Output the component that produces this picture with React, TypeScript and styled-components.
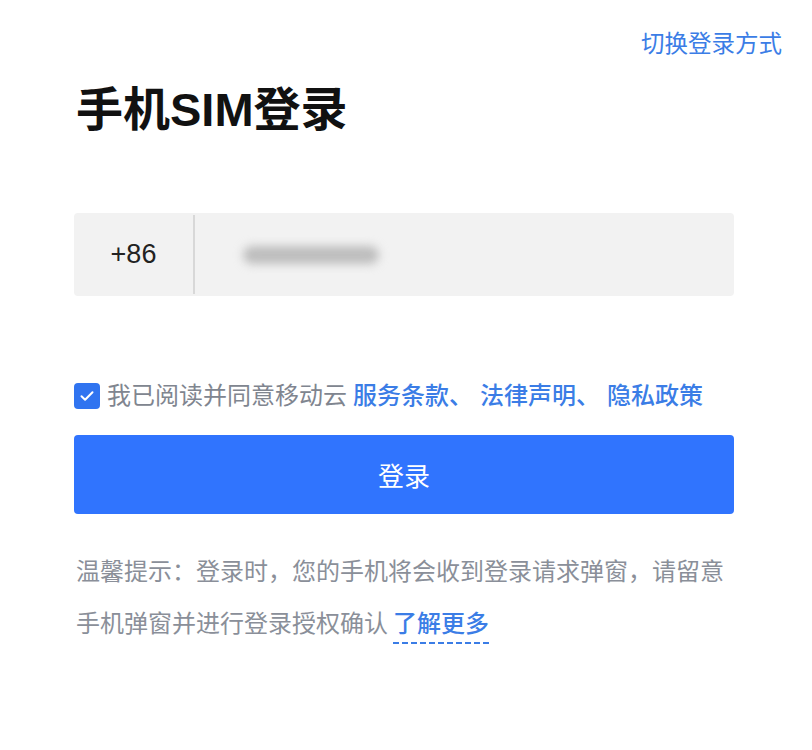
import { FC } from "react";
import styled, { createGlobalStyle } from "styled-components";

const GlobalStyle = createGlobalStyle`
  html, body {
    margin: 0;
    padding: 0;
    background: #ffffff;
  }
  body {
    font-family: "Liberation Sans", "Noto Sans CJK SC", sans-serif;
  }
`;

const Page = styled.div`
  width: 812px;
  height: 750px;
  box-sizing: border-box;
  padding: 28px 30px 0 74px;
  overflow: hidden;
`;

const TopBar = styled.div`
  display: flex;
  justify-content: flex-end;
  height: 32px;
`;

const SwitchLink = styled.a`
  font-size: 23.5px;
  line-height: 32px;
  color: #3b7de6;
  text-decoration: none;
  cursor: pointer;
`;

const Form = styled.div`
  width: 660px;
  display: flex;
  flex-direction: column;
`;

const Title = styled.h1`
  margin: 20px 0 0 2px;
  font-size: 47px;
  line-height: 60px;
  font-weight: 700;
  color: #111;
`;

const InputBox = styled.div`
  margin-top: 73px;
  height: 83px;
  display: flex;
  align-items: center;
  background: #f2f2f2;
  border-radius: 4px;
`;

const Prefix = styled.div`
  width: 121px;
  height: 79px;
  display: flex;
  align-items: center;
  justify-content: center;
  font-size: 27px;
  color: #222;
  border-right: 2px solid #d8d8d8;
  box-sizing: border-box;
`;

const Masked = styled.div`
  margin-left: 48px;
  width: 136px;
  height: 18px;
  border-radius: 9px;
  background: #bdbdbd;
  filter: blur(5px);
`;

const AgreeRow = styled.div`
  margin-top: 84px;
  height: 32px;
  display: flex;
  align-items: center;
  font-size: 24px;
  line-height: 32px;
  color: #80858f;
  white-space: nowrap;
`;

const Check = styled.span`
  width: 26px;
  height: 26px;
  border-radius: 4px;
  background: #3074f0;
  display: flex;
  align-items: center;
  justify-content: center;
  margin-right: 7px;
  flex: none;
`;

const Link = styled.a<{ $gap?: number }>`
  color: #3b7de6;
  font-weight: 500;
  text-decoration: none;
  margin-left: ${(p) => p.$gap ?? 0}px;
`;

const Button = styled.button`
  margin-top: 23px;
  height: 79px;
  border: none;
  border-radius: 4px;
  background: #3074fe;
  color: #fff;
  font-family: inherit;
  font-size: 26px;
  cursor: pointer;
`;

const Tips = styled.p`
  margin: 32px 0 0 2px;
  font-size: 24px;
  line-height: 52px;
  color: #8a8f99;
`;

const More = styled.a`
  margin-left: 5px;
  padding-bottom: 7px;
  color: #3b7de6;
  font-weight: 500;
  text-decoration: none;
  background: repeating-linear-gradient(90deg, #3b7de6 0 6px, transparent 6px 9px)
    left bottom / 100% 2px no-repeat;
`;

const App: FC = () => {
  return (
    <>
      <GlobalStyle />
      <Page>
        <TopBar>
          <SwitchLink>切换登录方式</SwitchLink>
        </TopBar>
        <Form>
          <Title>手机SIM登录</Title>
          <InputBox>
            <Prefix>+86</Prefix>
            <Masked />
          </InputBox>
          <AgreeRow>
            <Check>
              <svg width="18" height="18" viewBox="0 0 18 18" fill="none">
                <path d="M3.5 9.2l3.6 3.6 7.4-7.6" stroke="#fff" strokeWidth="2" strokeLinecap="round" strokeLinejoin="round" />
              </svg>
            </Check>
            我已阅读并同意移动云
            <Link $gap={6}>服务条款、</Link>
            <Link $gap={7}>法律声明、</Link>
            <Link $gap={7}>隐私政策</Link>
          </AgreeRow>
          <Button>登录</Button>
          <Tips>
            温馨提示：登录时，您的手机将会收到登录请求弹窗，请留意手机弹窗并进行登录授权确认
            <More>了解更多</More>
          </Tips>
        </Form>
      </Page>
    </>
  );
};

export default App;
